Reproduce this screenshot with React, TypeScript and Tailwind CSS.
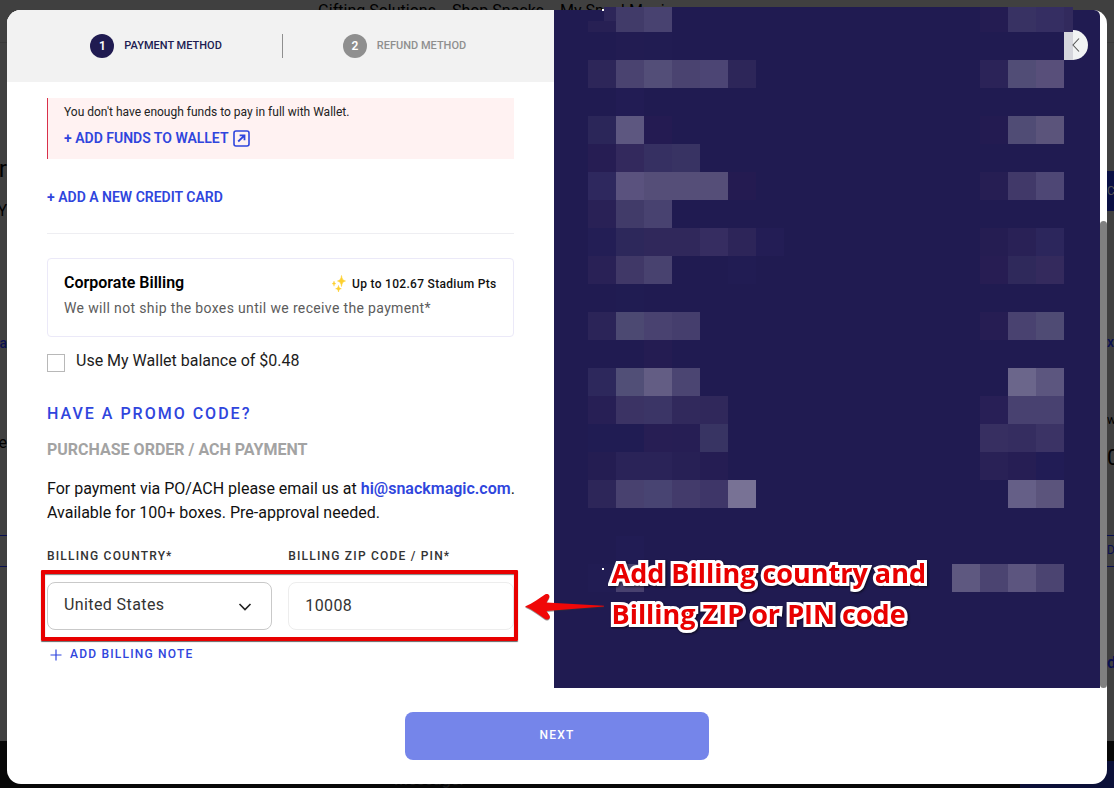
import React from "react";

type Row = { left: string[]; right: string[] };

const NAVY = "#201b51";

// Redacted order summary: one entry per 28px band, "" leaves a cell empty.
const ROWS: Row[] = [
  { left: ["", "#221c52", "#211c52"], right: [] },
  { left: ["#2d2659", "#4a4370", "#534e78", "#4a4370", "#4c4574", "#2d2659"], right: ["#2b2358", "#514d76", "#584f7a"] },
  { left: ["", "#221c54"], right: [] },
  { left: ["#2b2659", "#5d5780", "#241b52"], right: ["#231b51", "#504c75", "#5b547b"] },
  { left: ["#261d53", "#33295d", "#363062", "#383363"], right: [] },
  { left: ["#2e285e", "#5a527e", "#554e78", "#554e78", "#554e78", "#241b51"], right: ["#261e53", "#413969", "#4e4775"] },
  { left: ["#292156", "#413b69", "#484270"], right: [] },
  { left: ["#231e55", "#2d285b", "#30285b", "#30285b", "#362d61", "#2d2559", "#231d55"], right: ["#251d52", "#292156", "#2c265c"] },
  { left: ["#292156", "#403867", "#48426f", "", "", "#211c53"], right: ["#271d53", "#2f295b", "#342a5d"] },
  { left: ["", "#201c52"], right: [] },
  { left: ["#2b2458", "#4c4972", "#494270", "#453e6d"], right: ["#261d53", "#494270", "#4f4b74"] },
  { left: ["", "", "#241c52"], right: [] },
  { left: ["#2d285c", "#514f77", "#635d84", "#4b4572"], right: ["", "#6b668b", "#5c567f"] },
  { left: ["#271f55", "#3b3364", "#3b3566", "#31295c", "#30285b"], right: ["#281f56", "#484170", "#484170"] },
  { left: ["#201c53", "#201c53", "#271e54", "#261e54", "#383463"], right: ["#372f61", "#352d60", "#3b3365"] },
  { left: ["#241d52", "#2a2358", "#2a2358", "#272055", "#251d53"], right: ["#292156", "#261e54", "#211c55"] },
  { left: ["#2d2659", "#48416f", "#484472", "#433b6b", "#3e3668", "#787295"], right: ["", "#655f87", "#5b547c"] },
  { left: [], right: [] },
  { left: ["", "#211c54"], right: [] },
  { left: ["#211c53", "#48416f"], right: ["#5e5880", "#4b4471", "#5c557f", "#4b4471"] },
];

function Cells({ colors }: { colors: string[] }) {
  return (
    <div className="flex">
      {colors.map((c, i) => (
        <div key={i} className="size-7" style={{ backgroundColor: c || NAVY }} />
      ))}
    </div>
  );
}

function PageBehind() {
  return (
    <div aria-hidden="true" className="absolute inset-0 flex flex-col overflow-hidden bg-[#404040] text-black">
      <div className="flex h-[43px] justify-center gap-4 border-b border-[#383838] pt-px pr-[123px] text-[16px] leading-5">
        <span>Gifting Solutions</span>
        <span>Shop Snacks</span>
        <span>My SnackMagic</span>
      </div>
      <div className="flex flex-1 justify-between">
        <div className="flex w-[7px] flex-col items-end pt-[110px]">
          <span className="text-[24px] leading-8">r</span>
          <span className="mt-4 text-[16px] leading-5">Y</span>
          <span className="mt-[110px] text-[14px] leading-6 font-medium text-[#0a1050]">na</span>
          <span className="mt-[76px] text-[16px] leading-6">e</span>
          <span className="mt-20 h-8 w-full border-y border-[#0a1050]" />
        </div>
        <div className="flex w-[7px] flex-col items-start pt-32">
          <span className="h-10 w-full bg-[#0a1044] text-[12px] leading-10 text-[#555555]">C</span>
          <span className="mt-[119px] text-[14px] leading-6 font-medium text-[#0a1050]">xp</span>
          <span className="mt-14 text-[12px] leading-5">wi</span>
          <span className="mt-3 text-[22px] leading-8">0</span>
          <span className="mt-[61px] h-8 w-full border-y border-[#0a1050] text-[12px] leading-7 text-[#0a1050]">D</span>
          <span className="mt-[84px] text-[16px] leading-6 font-semibold text-[#0a1050]">d</span>
        </div>
      </div>
      <div className="flex h-[47px] items-end justify-between bg-[#070707] pl-[394px]">
        <span className="text-[16px] leading-4 font-medium text-[#1c1c1c]">Message.</span>
        <div className="h-[27px] w-[94px] bg-[#0b1038]" />
      </div>
    </div>
  );
}

function Step({ n, label, active }: { n: number; label: string; active?: boolean }) {
  return (
    <div className="flex items-center gap-2.5">
      <span
        className={
          active
            ? "flex size-6 items-center justify-center rounded-full bg-[#201b51] text-[12px] font-semibold text-white"
            : "flex size-6 items-center justify-center rounded-full bg-[#8f8f8f] text-[12px] font-semibold text-white"
        }
      >
        {n}
      </span>
      <span className={active ? "text-[11px] font-medium text-[#201b51]" : "text-[11px] font-medium text-[#8f8f8f]"}>
        {label}
      </span>
    </div>
  );
}

function ExternalIcon() {
  return (
    <svg width="17" height="17" viewBox="0 0 17 17" fill="none" stroke="#2f45dd" aria-hidden="true">
      <rect x="1" y="1" width="15" height="15" rx="2" strokeWidth="1.6" />
      <path d="M5.2 11.5 11 5.8M6.6 5.4h4.9v4.8" strokeWidth="1.8" />
    </svg>
  );
}

function Sparkles() {
  return (
    <svg width="14" height="17" viewBox="0 0 14 17" fill="#fdd02f" aria-hidden="true">
      <path d="M9.5 0.5C10 4 10.700 5.200 13.500 6C10.700 6.800 10 8 9.500 11.500C9 8 8.300 6.800 5.500 6C8.300 5.200 9 4 9.500 0.500Z" stroke="#fdd02f" strokeWidth="0.6" />
      <path d="M2 6C2.300 7.800 2.700 8.300 4 8.600C2.700 8.900 2.300 9.400 2 11.200C1.700 9.400 1.300 8.900 0 8.600C1.300 8.300 1.700 7.800 2 6Z" stroke="#fdd02f" strokeWidth="0.4" />
      <path d="M6.500 10.500C6.900 12.700 7.400 13.300 9.300 13.700C7.400 14.100 6.900 14.700 6.500 16.900C6.100 14.700 5.600 14.100 3.700 13.700C5.600 13.300 6.100 12.700 6.500 10.500Z" stroke="#fdd02f" strokeWidth="0.6" />
    </svg>
  );
}

function PaymentForm() {
  return (
    <section className="min-w-0 flex-1 rounded-tl-[14px] bg-white">
      <header className="flex h-[72px] items-center justify-center gap-[60px] rounded-tl-[14px] bg-[#f2f2f2] pr-1">
        <Step n={1} label="PAYMENT METHOD" active />
        <span className="h-6 w-px bg-[#8f8f8f]" />
        <Step n={2} label="REFUND METHOD" />
      </header>

      <div className="flex flex-col items-stretch px-10 pt-4">
        <div className="border-l border-[#d9304a] bg-[#fff2f2] pt-[5px] pb-2.5 pl-4">
          <p className="text-[12px] leading-[18px] text-[#222222]">You don't have enough funds to pay in full with Wallet.</p>
          <button className="mt-1.5 flex h-[22px] items-center gap-1 text-[14px] font-semibold text-[#2f45dd]">
            + ADD FUNDS TO WALLET
            <ExternalIcon />
          </button>
        </div>

        <button className="mt-7 self-start text-[14px] leading-5 font-semibold text-[#2f45dd]">+ ADD A NEW CREDIT CARD</button>

        <hr className="mt-[26px] border-[#eeeef2]" />

        <div className="mt-6 rounded border border-[#ebe9f8] px-4 pt-3 pb-4">
          <div className="flex h-6 items-center justify-between">
            <h2 className="text-[16px] leading-6 font-semibold text-black">Corporate Billing</h2>
            <span className="flex items-center gap-1.5 pt-px text-[12px] font-medium tracking-wide text-[#111111]">
              <Sparkles />
              Up to 102.67 Stadium Pts
            </span>
          </div>
          <p className="mt-px text-[14px] leading-6 tracking-wide text-[#5c5c5c]">We will not ship the boxes until we receive the payment*</p>
        </div>

        <label className="mt-3 flex h-6 gap-[11px] text-[16px] leading-6 text-[#1c1c1c]">
          <input type="checkbox" className="mt-[5px] size-[18px] shrink-0 appearance-none border border-[#b8b8b8] bg-white" />
          Use My Wallet balance of $0.48
        </label>

        <button className="mt-[31px] self-start text-[16px] leading-5 font-medium tracking-[2px] text-[#2f45dd]">HAVE A PROMO CODE?</button>

        <h3 className="mt-3.5 text-[16px] leading-6 font-bold text-[#a3a3a3]">PURCHASE ORDER / ACH PAYMENT</h3>

        <p className="mt-[15px] text-[16px] leading-6 text-[#111111]">
          <span className="whitespace-nowrap">
            For payment via PO/ACH please email us at{" "}
            <a href="mailto:hi@snackmagic.com" className="font-semibold text-[#2f45dd]">hi@snackmagic.com</a>.
          </span>
          <br />
          Available for 100+ boxes. Pre-approval needed.
        </p>

        <div className="mt-[23px] grid grid-cols-2 gap-x-4 text-[12px] leading-4 font-medium tracking-widest text-[#333333]">
          <label htmlFor="country">BILLING COUNTRY*</label>
          <label htmlFor="zip">BILLING ZIP CODE / PIN*</label>
        </div>

        <div className="relative mt-[18px] grid grid-cols-2 gap-x-4">
          <div className="relative">
            <select
              id="country"
              defaultValue="us"
              className="h-12 w-full appearance-none rounded-lg border border-[#c9c9c9] bg-white pr-10 pb-0.5 pl-4 text-[16px] tracking-wide text-[#333333]"
            >
              <option value="us">United States</option>
            </select>
            <svg width="14" height="10" viewBox="0 0 14 10" fill="none" className="pointer-events-none absolute top-5 right-5" aria-hidden="true">
              <path d="M1.500 2 7 7.600 12.500 2" stroke="#222" strokeWidth="1.6" />
            </svg>
          </div>
          <input
            id="zip"
            type="text"
            defaultValue="10008"
            className="h-12 w-full rounded-lg border border-[#ededed] bg-white px-4 pb-0.5 text-[16px] tracking-wide text-[#333333]"
          />
          <div className="pointer-events-none absolute -top-3 -right-1 -bottom-[11px] -left-1.5 rounded-[1px] border-4 border-[#e80000] shadow-[0_1px_1px_rgba(0,0,0,0.6),inset_0_1px_1px_rgba(0,0,0,0.5)]" />
          <div className="pointer-events-none absolute top-[6px] left-full z-10 flex items-start pl-2.5">
            <svg width="80" height="34" viewBox="0 0 80 34" className="mt-0.5 shrink-0" aria-hidden="true">
              <path d="M1 17.500C9 14 16 9 21 5.500C24 4 26.500 6.500 25 9L22.500 13.500L80 16.500V17.500L22.500 22L25.500 26.500C27 29.500 24 31.500 21 30C15 25.500 9 21 1 17.500Z" fill="#333" opacity="0.5" />
              <path d="M1 16.500C9 13 16 8 21 4.500C24 3 26.500 5.500 25 8L22.500 12.500L80 15.800V16.500L22.500 21L25.500 25.500C27 28.500 24 30.500 21 29C15 24.500 9 20 1 16.500Z" fill="#f00808" />
            </svg>
            <p className="-mt-9 pl-2 font-['Open_Sans','Noto_Sans',sans-serif] text-[27px] leading-[41px] font-bold whitespace-nowrap text-[#e80000] drop-shadow-[1px_1px_1px_rgba(0,0,0,0.6)] [-webkit-text-stroke:6px_white] [paint-order:stroke_fill] [stroke-linejoin:round]">
              Add Billing country and
              <br />
              Billing ZIP or PIN code
            </p>
          </div>
        </div>

        <button className="mt-3.5 flex h-5 items-center gap-2 self-start pl-[3px] text-[12px] font-medium tracking-widest text-[#2f45dd]">
          <svg width="12" height="12" viewBox="0 0 12 12" stroke="#2f45dd" strokeWidth="1.2" className="mt-0.5" aria-hidden="true">
            <path d="M6 .5v11M.5 6h11" />
          </svg>
          ADD BILLING NOTE
        </button>
      </div>
    </section>
  );
}

function OrderSummary() {
  return (
    <section aria-label="Order summary" className="relative min-w-0 flex-1 rounded-tr-[6px] bg-[#201b51]">
      <div className="absolute -top-[3px] right-[27px] left-[50px] flex h-[25px] justify-between bg-[#201b51]">
        <div className="flex">
          <span className="w-3 bg-[#2d2659]" />
          <span className="w-7 bg-[#413b69]" />
          <span className="w-7 bg-[#484270]" />
        </div>
        <div className="flex">
          <span className="w-7 bg-[#241c52]" />
          <span className="w-7 bg-[#383263]" />
          <span className="w-7 bg-[#352e62]" />
          <span className="w-[9px] bg-[#322a5d]" />
        </div>
      </div>
      <span className="absolute top-[11px] left-[34px] h-[11px] w-7 bg-[#272054]" />
      <span className="absolute -top-px left-[48px] size-0.5 bg-white" />
      <button aria-label="Collapse summary" className="absolute top-5 right-3">
        <svg width="24" height="30" viewBox="0 0 24 30" fill="none">
          <path d="M9 0A15 15 0 0 1 9 30Z" fill="#f1f3f3" />
          <path d="M0 2H9V30H0Z" fill="#d5d6dc" />
          <path d="M15 8.500 9 15l6 6.500" stroke="#555" strokeWidth="1.100" />
        </svg>
      </button>
      <div className="flex flex-col pt-[22px] pr-9 pb-24 pl-[34px]">
        {ROWS.map((r, i) => (
          <div key={i} className="flex h-7 justify-between">
            <Cells colors={r.left} />
            <Cells colors={r.right} />
          </div>
        ))}
      </div>
      <span className="absolute top-[558px] left-[48px] size-0.5 bg-white" />
    </section>
  );
}

export default function App() {
  return (
    <div className="relative flex min-h-screen px-[7px] pt-2.5 pb-1 font-['Roboto',sans-serif]">
      <PageBehind />
      <main className="relative flex flex-1 flex-col rounded-[14px] bg-white">
        <div className="flex flex-1">
          <PaymentForm />
          <OrderSummary />
          <div className="flex w-[7px] flex-col pt-[211px]">
            <div className="flex-1 rounded-full bg-[#808080]" />
          </div>
        </div>
        <footer className="flex justify-center py-6">
          <button className="h-12 w-[304px] rounded-lg bg-[#7585ea] pb-0.5 text-[12px] font-medium tracking-widest text-white">NEXT</button>
        </footer>
      </main>
    </div>
  );
}
